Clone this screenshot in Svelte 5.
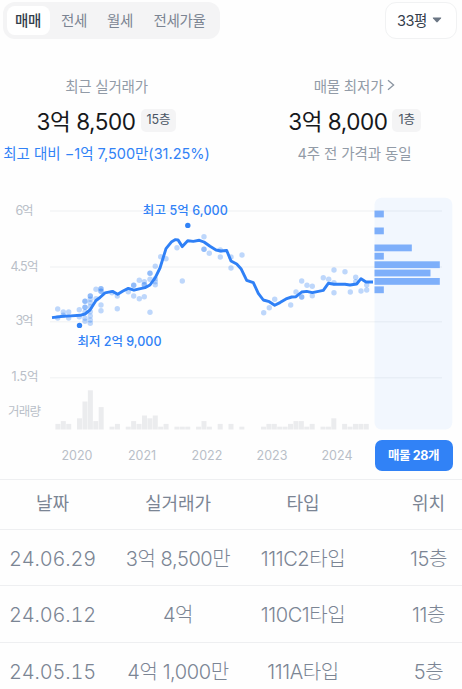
<script lang="ts">
  type Point = [number, number];

  const tabs = ["매매", "전세", "월세", "전세가율"];
  let active = $state("매매");

  const gridLines = [
    { y: 211, label: "6억", x: 24.5, width: 18 },
    { y: 267, label: "4.5억", x: 24.5, width: 28 },
    { y: 321.7, label: "3억", x: 24.5, width: 18 },
    { y: 377.7, label: "1.5억", x: 25, width: 27 },
  ];

  const trend: Point[] = [
    [52, 317.6], [63, 316.3], [71, 315.9], [80, 315.3], [85, 314], [90, 310], [96, 300.5], [100, 297.5],
    [105, 292.9], [112.5, 291.4], [117.7, 294.2], [123, 291], [128.3, 288.4], [134, 290.2],
    [139.3, 288.8], [145, 287.6], [150, 285], [155.3, 277.6], [160, 268], [166, 248.6],
    [171.7, 241.7], [175.5, 239.6], [178, 239.9], [182.3, 246.6], [187.7, 240.8], [193.3, 241.4],
    [199.3, 240.3], [204, 242], [210, 246.3], [216, 250], [221, 251], [226.7, 250.5],
    [231, 261], [236.7, 264], [241, 268.7], [246.7, 280.3], [253.3, 282.7], [258.3, 293.3],
    [263.3, 300], [269.3, 301.7], [274.7, 305.3], [280, 302.6], [286, 298.9], [291.7, 297],
    [296, 296.7], [301.7, 292], [306.7, 291.4], [312.3, 292.6], [323.3, 290.3],
    [328.3, 283.3], [334, 284.3], [345, 284.3], [350, 285], [356.7, 284], [361, 278.7],
    [366, 282], [373, 282],
  ];

  const deals: Point[] = [
    [57.7, 309], [57.7, 318], [63.3, 312], [63.3, 315.3], [68.7, 312], [68.7, 318],
    [79.3, 309.7], [79.3, 316.7], [85, 301.3], [85, 301.3], [85, 307.3], [85, 307.3],
    [85, 312], [85, 318.3], [85, 321.3], [90.3, 296], [90.3, 296], [90.3, 299.3],
    [90.3, 302.7], [90.3, 306.7], [90.3, 311.7], [90.3, 316], [90.3, 320], [90.3, 323.3],
    [96, 289.3], [96, 298.7], [101, 288.7], [101, 288.7], [101, 291.3],
    [101, 291.3], [101, 305], [101, 310.7], [112, 292.7], [117.3, 296], [117.3, 308.7],
    [128.3, 291.7], [133.7, 285.3], [133.7, 285.3], [133.7, 296], [139.3, 280.3],
    [139.3, 298.7], [144.3, 281.7], [144.3, 284.7], [144.3, 284.7], [144.3, 296.7],
    [150, 273.3], [150, 273.3], [150, 279.3], [150, 312.3], [155.3, 266.3],
    [155.3, 278.7], [155.3, 281.7], [155.3, 284.7], [160.7, 256.7], [166, 258.7],
    [177, 247.7], [182.3, 281], [204, 236.7], [204, 249.3], [204, 249.3], [209.3, 253.3],
    [220.3, 250], [220.3, 257], [231, 257], [231, 268], [242, 255], [263.7, 312.7],
    [269.3, 307.7], [274.7, 299.3], [290.7, 305], [296, 292], [301.7, 281], [301.7, 297],
    [301.7, 297], [307, 285.3], [312.3, 286.3], [312.3, 295.7], [323.3, 277.7],
    [328.7, 279.3], [334, 270], [334, 282.7], [334, 292.7], [345, 271.7], [350.3, 292],
    [355.7, 277.3], [355.7, 281.7], [361, 291], [366.7, 290], [366.7, 285],
  ];

  const volumes = [
    2, 3, 2, 0, 4, 10, 14, 3, 8, 0, 1, 2, 0, 1, 3, 2, 5, 4, 5, 1, 2, 0, 1, 1, 1, 0, 1, 3, 1,
    0, 2, 0, 2, 0, 1, 0, 0, 0, 1, 2, 2, 1, 1, 2, 3, 3, 1, 2, 0, 1, 1, 4, 0, 2, 1, 2, 2, 2,
  ];

  // [top, number of listings]
  const listings: Point[] = [
    [210.6, 1], [227.5, 1], [244.5, 4], [252.8, 1], [261.3, 7], [269.6, 6], [278, 7], [286.4, 1],
  ];

  const years = [2020, 2021, 2022, 2023, 2024];

  const rows = [
    ["24.06.29", "3억 8,500만", "111C2타입", "15층"],
    ["24.06.12", "4억", "110C1타입", "11층"],
    ["24.05.15", "4억 1,000만", "111A타입", "5층"],
  ];
</script>

<main>
  <header>
    <nav class="tabs">
      {#each tabs as tab (tab)}
        <button type="button" class="tab" class:active={tab === active} onclick={() => (active = tab)}>{tab}</button>
      {/each}
    </nav>
    <button type="button" class="size">
      33평
      <svg width="10" height="6" viewBox="0 0 10 6"><path d="M1.2.4h7.6q.9 0 .3.8L5.7 5.1q-.7.7-1.4 0L.9 1.2Q.3.4 1.2.4Z" fill="#6b7684" /></svg>
    </button>
  </header>

  <section class="summary">
    <div class="col recent">
      <p class="caption">최근 실거래가</p>
      <p class="price"><strong>3억 8,500</strong><span class="floor">15층</span></p>
      <p class="note diff">최고 대비 −1억 7,500만(31.25%)</p>
    </div>
    <div class="col lowest">
      <p class="caption">
        매물 최저가
        <svg width="8" height="12" viewBox="0 0 8 12"><path d="M1 1.2 6.6 6 1 10.8" fill="none" stroke="#8b95a1" stroke-width="1.3" /></svg>
      </p>
      <p class="price"><strong>3억 8,000</strong><span class="floor">1층</span></p>
      <p class="note same">4주 전 가격과 동일</p>
    </div>
  </section>

  <svg class="chart" width="462" height="245" viewBox="0 190 462 245">
    <rect x="374.5" y="197.7" width="77.8" height="231.8" rx="7" fill="#f2f7fe" />
    {#each gridLines as line (line.y)}
      <path d="M50 {line.y}H442" stroke="#1b2a4a" stroke-opacity=".045" stroke-width="1.5" />
      <text class="axis" x={line.x} y={line.y + 3.7} textLength={line.width}>{line.label}</text>
    {/each}
    <text class="axis" x="24.5" y="416" textLength="33">거래량</text>

    {#each volumes as count, i}
      <rect x={55.4 + i * 5.41} y={429.5 - count * 2.8} width="5" height={count * 2.8} fill="#ebecee" />
    {/each}
    {#each listings as [y, count] (y)}
      <rect x="374.5" {y} width={count * 9.33} height="6.8" fill="#7eaffa" />
    {/each}
    {#each deals as [cx, cy]}
      <circle {cx} {cy} r="2.7" fill="#3182f6" fill-opacity=".31" />
    {/each}
    <polyline points={trend.join(" ")} fill="none" stroke="#2f80f6" stroke-width="2.9" stroke-linejoin="round" />
    <circle cx="187.8" cy="225.4" r="2.7" fill="#3182f6" />
    <circle cx="79.5" cy="325.4" r="2.7" fill="#3182f6" />
    <text class="peak" x="185.3" y="214.6" textLength="85">최고 5억 6,000</text>
    <text class="peak" x="119.5" y="346.3" textLength="84">최저 2억 9,000</text>
  </svg>

  <div class="timeline">
    {#each years as year (year)}
      <span class="year">{year}</span>
    {/each}
    <button type="button" class="listing">매물 28개</button>
  </div>

  <table>
    <thead>
      <tr><th>날짜</th><th>실거래가</th><th>타입</th><th>위치</th></tr>
    </thead>
    <tbody>
      {#each rows as row (row[0])}
        <tr>
          {#each row as cell}
            <td>{cell}</td>
          {/each}
        </tr>
      {/each}
    </tbody>
  </table>
</main>

<style>
  :global(body) {
    background: #fefefe;
    overflow: hidden;
  }

  main {
    width: 462px;
    height: 689px;
    overflow: hidden;
    font-family: Inter, "Noto Sans CJK KR", sans-serif;
    color: #333d4b;
  }

  button {
    font: inherit;
    border: 0;
    padding: 0;
    white-space: nowrap;
  }

  p {
    margin: 0;
    white-space: nowrap;
  }

  header {
    display: flex;
    justify-content: space-between;
    align-items: flex-start;
    height: 75px;
    padding: 2px 5px 0 3px;
    box-sizing: border-box;
  }

  .tabs {
    display: flex;
    gap: 4px;
    height: 37px;
    width: 217px;
    padding: 4px;
    box-sizing: border-box;
    border-radius: 12px;
    background: #f4f4f5;
  }

  .tab {
    width: 43px;
    height: 29px;
    border-radius: 8px;
    background: transparent;
    color: #7b8492;
    font-size: 14.5px;
    line-height: 27px;
    letter-spacing: -0.3px;
    padding-right: 1px;
  }

  .tab:nth-child(2) {
    width: 41px;
  }

  .tab:last-child {
    width: 68px;
  }

  .tab.active {
    background: #fff;
    color: #333d4b;
    font-weight: 500;
  }

  .size {
    display: flex;
    align-items: center;
    justify-content: center;
    gap: 5px;
    width: 72px;
    height: 37px;
    padding: 0 3px 2px 0;
    box-sizing: border-box;
    border: 1.5px solid #f1f2f3;
    border-radius: 11px;
    background: #fff;
    color: #333d4b;
    font-size: 14.5px;
    letter-spacing: -0.5px;
  }

  .summary {
    display: flex;
    height: 115px;
  }

  .col {
    display: flex;
    flex: none;
    flex-direction: column;
    align-items: center;
  }

  .recent {
    width: 213px;
  }

  .lowest {
    width: 283px;
  }

  .caption {
    display: flex;
    align-items: center;
    gap: 4px;
    height: 20px;
    color: #929ba7;
    font-size: 14.5px;
    letter-spacing: -0.2px;
  }

  .price {
    display: flex;
    align-items: center;
    gap: 5px;
    height: 24px;
    margin-top: 13px;
  }

  .price strong {
    color: #16181b;
    font-size: 22.5px;
    font-weight: 400;
    letter-spacing: -0.45px;
  }

  .floor {
    height: 23px;
    padding: 0 6px;
    border-radius: 5px;
    background: #f4f4f5;
    color: #4a5463;
    font-size: 12.5px;
    line-height: 22px;
    letter-spacing: -0.1px;
  }

  .note {
    margin-top: 12px;
    color: #929ba7;
    font-size: 14.5px;
    line-height: 20px;
    letter-spacing: -0.1px;
  }

  .diff {
    color: #3182f6;
    letter-spacing: 0;
  }

  .chart {
    display: block;
  }

  .axis {
    fill: #b9bfc8;
    font-size: 12.5px;
    text-anchor: middle;
  }

  .peak {
    fill: #3182f6;
    font-size: 12.5px;
    font-weight: 500;
    text-anchor: middle;
  }

  .timeline {
    display: flex;
    align-items: center;
    height: 44px;
    padding: 0 9.5px 3px 44.5px;
    box-sizing: border-box;
  }

  .year {
    width: 65px;
    color: #b9bfc8;
    font-size: 12.5px;
    text-align: center;
  }

  .listing {
    width: 78px;
    height: 31px;
    margin-left: 5px;
    flex-shrink: 0;
    border-radius: 7px;
    background: #3182f6;
    color: #fff;
    font-size: 12.5px;
    font-weight: 700;
    line-height: 29px;
    letter-spacing: -0.4px;
  }

  table {
    width: 482px;
    table-layout: fixed;
    border-collapse: collapse;
    color: #7b8594;
    letter-spacing: -0.4px;
  }

  th,
  td {
    height: 56.3px;
    padding: 3px 0 0;
    box-sizing: border-box;
    border-top: 1.5px solid #eeeff1;
    font-size: 20px;
    font-weight: 300;
    line-height: 24px;
    text-align: center;
    white-space: nowrap;
  }

  td:first-child {
    font-variant-numeric: tabular-nums;
    letter-spacing: -0.2px;
  }

  th {
    height: 50px;
    padding: 0 0 2px;
    font-size: 18px;
    font-weight: 400;
    letter-spacing: 0;
  }

  th:nth-child(1) {
    width: 105px;
  }

  th:nth-child(2) {
    width: 146px;
  }

  th:nth-child(3) {
    width: 104px;
  }

  th:nth-child(4) {
    width: 147px;
  }
</style>
